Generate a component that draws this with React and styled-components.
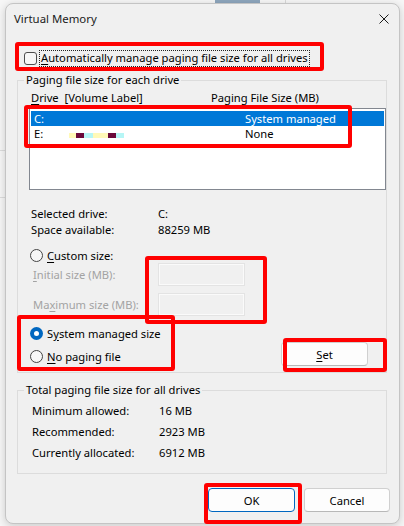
import React from "react";
import styled, { createGlobalStyle } from "styled-components";

const GlobalStyle = createGlobalStyle`
  html, body {
    margin: 0;
    padding: 0;
    background: #f4f4f4;
  }
  * {
    box-sizing: border-box;
  }
`;

const UI_FONT = `"Noto Sans", "Open Sans", sans-serif`;

const Screen = styled.div`
  position: relative;
  width: 404px;
  height: 526px;
  overflow: hidden;
  background: #f6f6f6;
  padding: 3px 4px 0 5px;
  font-family: ${UI_FONT};
  font-size: 11.2px;
  color: #000;
`;

// bits of the window that sits behind the dialog
const BackdropBit = styled.div`
  position: absolute;
  left: ${(p) => p.$x}px;
  top: ${(p) => p.$y}px;
  width: ${(p) => p.$w}px;
  height: ${(p) => p.$h}px;
  background: ${(p) => p.$color};
`;

const Dialog = styled.div`
  position: relative;
  width: 395px;
  height: 521px;
  background: #f0f0f0;
  border: 1px solid #c4c4c4;
  border-radius: 8px;
  box-shadow: 0 2px 8px rgba(0, 0, 0, 0.18);
  display: flex;
  flex-direction: column;
`;

const TitleBar = styled.div`
  height: 29px;
  display: flex;
  align-items: center;
  justify-content: space-between;
  padding: 0 0 0 8px;
`;

const Title = styled.div`
  font-size: 11.4px;
  color: #1b1b1b;
`;

const CloseButton = styled.div`
  width: 30px;
  height: 29px;
  display: flex;
  align-items: center;
  justify-content: center;
  border-top-right-radius: 8px;
`;

const Body = styled.div`
  flex: 1;
  display: flex;
  flex-direction: column;
  padding: 0 12px 0 11px;
`;

const Mnemonic = styled.u`
  text-decoration-thickness: 1px;
  text-underline-offset: 2px;
`;

const CheckRow = styled.label`
  display: flex;
  align-items: center;
  height: 16px;
  margin: 17px 0 0 7px;
`;

const CheckBox = styled.span`
  width: 13px;
  height: 13px;
  border: 1px solid #4d4d4d;
  border-radius: 3px;
  background: #f7f7f7;
  margin-right: 3px;
`;

const FocusLabel = styled.span`
  line-height: 14px;
  padding: 0 1px 1px 1px;
  outline: 1px dotted #222;
  outline-offset: 0;
`;

const Group = styled.fieldset`
  margin: ${(p) => p.$mt}px 0 0 0;
  padding: ${(p) => p.$pad};
  border: 1px solid #dcdcdc;
  min-width: 0;
  display: flex;
  flex-direction: column;
`;

const Legend = styled.legend`
  margin-left: ${(p) => p.$shift}px;
  padding: 0 2px;
  line-height: 16px;
  height: 16px;
`;

const ListHeader = styled.div`
  display: grid;
  grid-template-columns: 180px 1fr;
  height: 16px;
  line-height: 16px;
  padding-left: 2px;
`;

const DriveList = styled.div`
  margin-top: 2px;
  margin-right: -10px;
  height: 82px;
  background: #fff;
  border: 1px solid #828790;
  padding: 2px 1px;
`;

const DriveRow = styled.div`
  display: grid;
  grid-template-columns: 211px 1fr;
  height: 15px;
  line-height: 15px;
  padding-left: 3px;
  background: ${(p) => (p.$selected ? "#0078d7" : "transparent")};
  color: ${(p) => (p.$selected ? "#fff" : "#000")};
`;

const DriveName = styled.span`
  display: flex;
  align-items: center;
`;

const Redacted = styled.span`
  display: flex;
  margin: 4px 0 0 26px;
  height: 5px;
`;

const Swatch = styled.span`
  width: ${(p) => p.$w}px;
  height: 5px;
  background: ${(p) => p.$c};
`;

const InfoGrid = styled.div`
  display: grid;
  grid-template-columns: ${(p) => p.$labelWidth}px 1fr;
  margin: ${(p) => p.$margin};
  line-height: ${(p) => p.$line}px;
`;

const RadioRow = styled.label`
  display: flex;
  align-items: center;
  height: 16px;
  margin-top: ${(p) => p.$mt}px;
  padding-left: 1px;
`;

const RadioDot = styled.span`
  width: 13px;
  height: 13px;
  border-radius: 50%;
  margin-right: 4px;
  border: ${(p) => (p.$checked ? "none" : "1px solid #444")};
  background: ${(p) => (p.$checked ? "#0067c0" : "#f7f7f7")};
  display: flex;
  align-items: center;
  justify-content: center;

  &::after {
    content: "";
    display: ${(p) => (p.$checked ? "block" : "none")};
    width: 5px;
    height: 5px;
    border-radius: 50%;
    background: #fff;
  }
`;

const SizeRow = styled.div`
  display: flex;
  align-items: center;
  margin-top: ${(p) => p.$mt}px;
  padding-left: 4px;
  color: #a3a3a3;
`;

const SizeLabel = styled.span`
  width: 125px;
`;

const SizeInput = styled.div`
  width: 87px;
  height: 23px;
  border: 1px solid #e3e3e3;
  box-shadow: inset 0 0 0 1px #fafafa;
  background: #f0f0f0;
`;

const ModeRow = styled.div`
  display: flex;
  align-items: flex-end;
  justify-content: space-between;
  margin-top: 9px;
  padding-right: 8px;
`;

const RadioColumn = styled.div`
  display: flex;
  flex-direction: column;
`;

const Button = styled.div`
  width: ${(p) => p.$w}px;
  height: 24px;
  display: flex;
  align-items: center;
  justify-content: center;
  background: #fdfdfd;
  border: 1px solid ${(p) => (p.$default ? "#0067c0" : "#d0d0d0")};
  border-bottom-color: ${(p) => (p.$default ? "#0067c0" : "#b8b8b8")};
  border-radius: 4px;
  margin-bottom: ${(p) => p.$mb || 0}px;
`;

const ButtonBar = styled.div`
  display: flex;
  justify-content: flex-end;
  gap: 9px;
  margin: 14px -3px 0 0;
`;

// red annotation frames drawn over the dialog
const Callout = styled.div`
  position: absolute;
  left: ${(p) => p.$x}px;
  top: ${(p) => p.$y}px;
  width: ${(p) => p.$w}px;
  height: ${(p) => p.$h}px;
  border: 4px solid #ff0000;
  border-radius: 3px;
  pointer-events: none;
`;

const callouts = [
  { x: 15, y: 42, w: 309, h: 29 },
  { x: 24, y: 105, w: 328, h: 43 },
  { x: 145, y: 256, w: 122, h: 68 },
  { x: 17, y: 315, w: 158, h: 56 },
  { x: 283, y: 338, w: 104, h: 34 },
  { x: 204, y: 483, w: 98, h: 41 },
];

const redactedSwatches = [
  ["#fff9b8", 7],
  ["#6a0a3a", 8],
  ["#b6f6f6", 9],
  ["#fff9b8", 15],
  ["#6a0a3a", 8],
  ["#b6f6f6", 8],
];

const CloseIcon = () => (
  <svg width="10" height="10" viewBox="0 0 10 10">
    <path d="M0.5 0.5 L9.5 9.5 M9.5 0.5 L0.5 9.5" stroke="#1b1b1b" strokeWidth="1" />
  </svg>
);

export default function App() {
  return (
    <Screen>
      <GlobalStyle />
      <BackdropBit $x={215} $y={0} $w={45} $h={3} $color="#8ea6bd" />
      <BackdropBit $x={285} $y={0} $w={1} $h={3} $color="#d8d8d8" />
      <BackdropBit $x={0} $y={150} $w={5} $h={1} $color="#dcdcdc" />
      <BackdropBit $x={0} $y={197} $w={5} $h={1} $color="#dcdcdc" />

      <Dialog>
        <TitleBar>
          <Title>Virtual Memory</Title>
          <CloseButton>
            <CloseIcon />
          </CloseButton>
        </TitleBar>

        <Body>
          <CheckRow>
            <CheckBox />
            <FocusLabel>
              <Mnemonic>A</Mnemonic>utomatically manage paging file size for all drives
            </FocusLabel>
          </CheckRow>

          <Group $mt={6} $pad="2px 10px 8px 11px">
            <Legend $shift={-5}>Paging file size for each drive</Legend>
            <ListHeader>
              <span>
                <Mnemonic>D</Mnemonic>rive&nbsp; [Volume Label]
              </span>
              <span>Paging File Size (MB)</span>
            </ListHeader>

            <DriveList>
              <DriveRow $selected>
                <DriveName>C:</DriveName>
                <span>System managed</span>
              </DriveRow>
              <DriveRow>
                <DriveName>
                  E:
                  <Redacted>
                    {redactedSwatches.map(([c, w], i) => (
                      <Swatch key={i} $c={c} $w={w} />
                    ))}
                  </Redacted>
                </DriveName>
                <span>None</span>
              </DriveRow>
            </DriveList>

            <InfoGrid $labelWidth={127} $line={16} $margin="16px 0 0 2px">
              <span>Selected drive:</span>
              <span>C:</span>
              <span>Space available:</span>
              <span>88259 MB</span>
            </InfoGrid>

            <RadioRow $mt={9}>
              <RadioDot />
              <span>
                <Mnemonic>C</Mnemonic>ustom size:
              </span>
            </RadioRow>

            <SizeRow $mt={0}>
              <SizeLabel>
                <Mnemonic>I</Mnemonic>nitial size (MB):
              </SizeLabel>
              <SizeInput />
            </SizeRow>
            <SizeRow $mt={7}>
              <SizeLabel>
                Ma<Mnemonic>x</Mnemonic>imum size (MB):
              </SizeLabel>
              <SizeInput />
            </SizeRow>

            <ModeRow>
              <RadioColumn>
                <RadioRow $mt={0}>
                  <RadioDot $checked />
                  <span>
                    S<Mnemonic>y</Mnemonic>stem managed size
                  </span>
                </RadioRow>
                <RadioRow $mt={7}>
                  <RadioDot />
                  <span>
                    <Mnemonic>N</Mnemonic>o paging file
                  </span>
                </RadioRow>
              </RadioColumn>
              <Button $w={87} $mb={-2}>
                <span>
                  <Mnemonic>S</Mnemonic>et
                </span>
              </Button>
            </ModeRow>
          </Group>

          <Group $mt={9} $pad="2px 10px 10px 14px">
            <Legend $shift={-8}>Total paging file size for all drives</Legend>
            <InfoGrid $labelWidth={127} $line={21} $margin="0">
              <span>Minimum allowed:</span>
              <span>16 MB</span>
              <span>Recommended:</span>
              <span>2923 MB</span>
              <span>Currently allocated:</span>
              <span>6912 MB</span>
            </InfoGrid>
          </Group>

          <ButtonBar>
            <Button $w={87} $default>
              OK
            </Button>
            <Button $w={86}>Cancel</Button>
          </ButtonBar>
        </Body>
      </Dialog>

      {callouts.map((c, i) => (
        <Callout key={i} $x={c.x} $y={c.y} $w={c.w} $h={c.h} />
      ))}
    </Screen>
  );
}
